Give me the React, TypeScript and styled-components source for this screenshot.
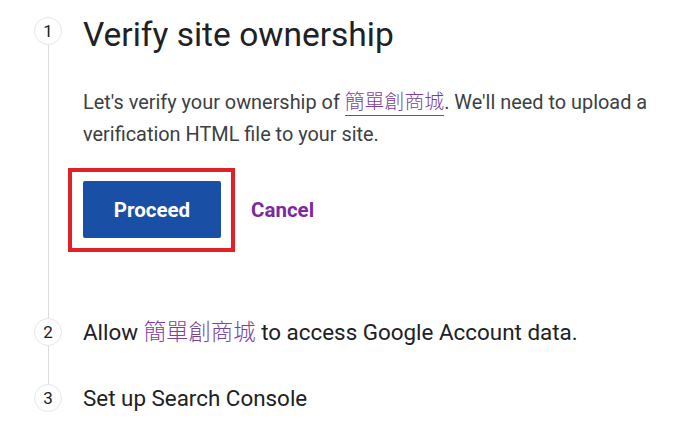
import styled, { createGlobalStyle } from 'styled-components';

const GlobalStyle = createGlobalStyle`
  html, body {
    margin: 0;
    padding: 0;
    background: #ffffff;
  }
  body {
    font-family: Roboto, "Noto Sans CJK TC", "Liberation Sans", sans-serif;
    color: #202124;
  }
`;

const Stepper = styled.div`
  display: flex;
  flex-direction: column;
  padding-top: 17px;
`;

const Step = styled.div<{ $height: number }>`
  display: flex;
  height: ${props => props.$height}px;
`;

const Rail = styled.div`
  display: flex;
  flex-direction: column;
  align-items: center;
  width: 28px;
  margin-left: 34px;
  margin-right: 21px;
`;

const Badge = styled.div`
  box-sizing: border-box;
  width: 28px;
  height: 28px;
  border: 1.5px solid #e6e6e6;
  border-radius: 50%;
  display: flex;
  align-items: center;
  justify-content: center;
  font-size: 17px;
  color: #202124;
  flex-shrink: 0;
`;

const Connector = styled.div`
  width: 1px;
  flex: 1;
  background: #dadce0;
`;

const Body = styled.div`
  flex: 1;
  min-width: 0;
`;

const Title = styled.h1`
  margin: -2px 0 0;
  font-size: 33.5px;
  line-height: 40px;
  font-weight: 400;
  color: #202124;
`;

const StepLabel = styled.div`
  font-size: 22.4px;
  line-height: 28px;
  color: #202124;
`;

const Paragraph = styled.p`
  margin: 32px 0 0;
  font-size: 19.9px;
  line-height: 32px;
  color: #3c4043;
`;

const SiteLink = styled.a`
  color: #7b3fa0;
  font-weight: 300;
  text-decoration: none;
  border-bottom: 1px solid #7b3fa0;
  padding-bottom: 1px;
`;

const SiteName = styled.span`
  color: #7b3fa0;
  font-weight: 300;
`;

const Actions = styled.div`
  display: flex;
  align-items: center;
  margin-top: 17px;
  margin-left: -15px;
`;

const Highlight = styled.div`
  border: 4px solid #e3202a;
  padding: 9px 10px 10px 11px;
`;

const PrimaryButton = styled.button`
  width: 138px;
  height: 57px;
  border: none;
  border-radius: 2px;
  background: #1a4fa6;
  color: #ffffff;
  font-family: Roboto, "Liberation Sans", sans-serif;
  font-size: 20.5px;
  font-weight: 700;
  cursor: pointer;
`;

const TextButton = styled.button`
  margin-left: 16px;
  border: none;
  background: none;
  padding: 0;
  color: #7b2a9e;
  font-family: Roboto, "Liberation Sans", sans-serif;
  font-size: 20.5px;
  font-weight: 700;
  cursor: pointer;
`;

export default function App() {
  return (
    <>
      <GlobalStyle />
      <Stepper>
        <Step $height={301}>
          <Rail>
            <Badge>1</Badge>
            <Connector />
          </Rail>
          <Body>
            <Title>Verify site ownership</Title>
            <Paragraph>
              Let's verify your ownership of <SiteLink href="#">簡單創商城</SiteLink>. We'll need to upload a
              verification HTML file to your site.
            </Paragraph>
            <Actions>
              <Highlight>
                <PrimaryButton>Proceed</PrimaryButton>
              </Highlight>
              <TextButton>Cancel</TextButton>
            </Actions>
          </Body>
        </Step>
        <Step $height={66}>
          <Rail>
            <Badge>2</Badge>
            <Connector />
          </Rail>
          <Body>
            <StepLabel>
              Allow <SiteName>簡單創商城</SiteName> to access Google Account data.
            </StepLabel>
          </Body>
        </Step>
        <Step $height={40}>
          <Rail>
            <Badge>3</Badge>
          </Rail>
          <Body>
            <StepLabel>Set up Search Console</StepLabel>
          </Body>
        </Step>
      </Stepper>
    </>
  );
}
